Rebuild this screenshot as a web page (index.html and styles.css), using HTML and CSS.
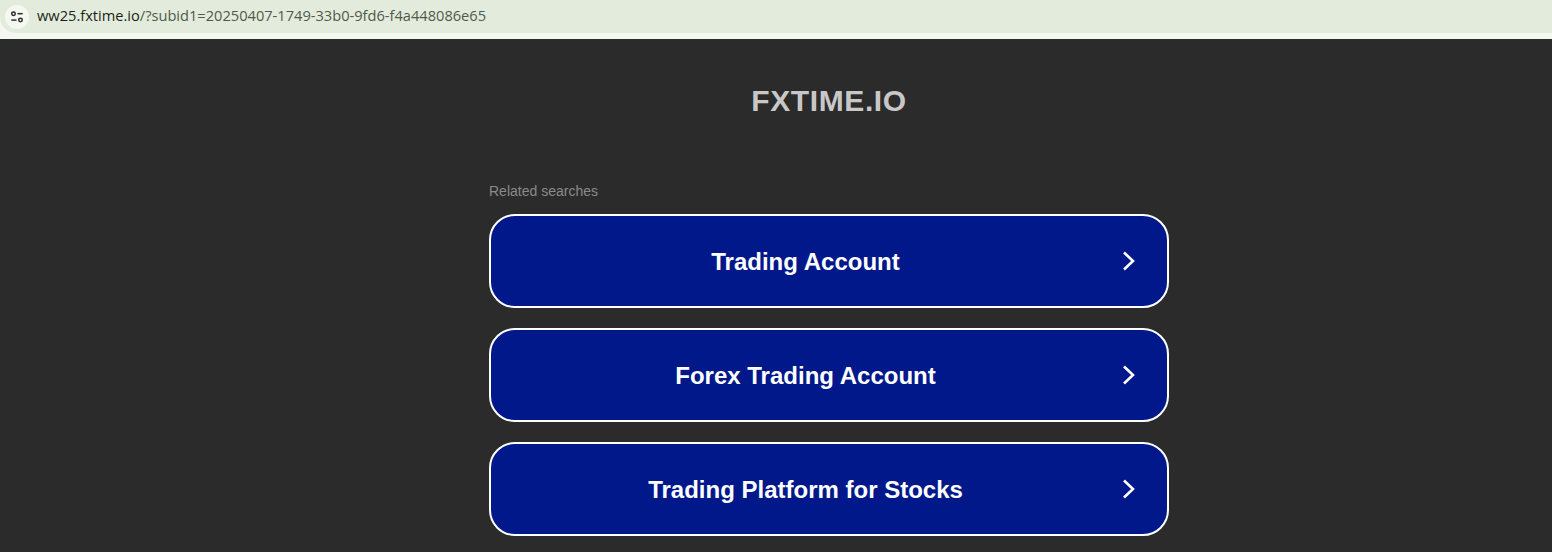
FILE: index.html
```html
<!DOCTYPE html>
<html lang="en">
<head>
  <meta charset="UTF-8">
  <title>fxtime.io</title>
  <link rel="stylesheet" href="styles.css">
</head>
<body>
  <div class="browser-bar">
    <div class="address">
      <span class="site-icon">
        <svg width="14" height="14" viewBox="0 0 16 16" fill="none" stroke="#2b2b2b" stroke-width="1.7">
          <circle cx="4" cy="4.2" r="2"/>
          <path d="M8.5 4.2h6"/>
          <path d="M1.5 11.5h6"/>
          <circle cx="12" cy="11.5" r="2"/>
        </svg>
      </span>
      <span class="url"><span class="host">ww25.fxtime.io</span>/?subid1=20250407-1749-33b0-9fd6-f4a448086e65</span>
    </div>
  </div>

  <div class="page">
    <div class="content">
      <h1 class="site-name">FXTIME.IO</h1>
      <p class="searches-label">Related searches</p>
      <a class="search-link" href="#">
        <span class="search-text">Trading Account</span>
        <svg class="chevron" width="14" height="20" viewBox="0 0 14 20" fill="none" stroke="#fff" stroke-width="2.6"><path d="M2 1.5l9 8.5-9 8.5"/></svg>
      </a>
      <a class="search-link" href="#">
        <span class="search-text">Forex Trading Account</span>
        <svg class="chevron" width="14" height="20" viewBox="0 0 14 20" fill="none" stroke="#fff" stroke-width="2.6"><path d="M2 1.5l9 8.5-9 8.5"/></svg>
      </a>
      <a class="search-link" href="#">
        <span class="search-text">Trading Platform for Stocks</span>
        <svg class="chevron" width="14" height="20" viewBox="0 0 14 20" fill="none" stroke="#fff" stroke-width="2.6"><path d="M2 1.5l9 8.5-9 8.5"/></svg>
      </a>
    </div>
  </div>
</body>
</html>
```

FILE: styles.css
```css
html, body {
  height: 552px;
  overflow: hidden;
}
body {
  margin: 0;
  background-color: #2b2b2b;
  font-family: "Liberation Sans", Arial, sans-serif;
}
.browser-bar {
  height: 39px;
  box-sizing: border-box;
  padding-bottom: 6px;
  background-color: #f5f8f0;
}
.address {
  height: 33px;
  display: flex;
  align-items: center;
  background-color: #e3ecdc;
  border-bottom-left-radius: 16px;
}
.site-icon {
  width: 24px;
  height: 24px;
  margin-left: 5px;
  display: flex;
  align-items: center;
  justify-content: center;
  border-radius: 50%;
  background-color: #f5f8f0;
}
.url {
  margin-left: 8px;
  margin-top: -3px;
  font-family: "Open Sans", "Noto Sans", sans-serif;
  font-size: 14.63px;
  color: #4f5a4d;
}
.host {
  color: #1b1f1b;
}
.page {
  padding-left: 106px;
}
.content {
  width: 680px;
  margin: 0 auto;
}
.site-name {
  margin: 44px 0 0;
  font-size: 30px;
  line-height: 36px;
  letter-spacing: 0.6px;
  font-weight: bold;
  text-align: center;
  color: #c8c8c8;
}
.searches-label {
  margin: 64px 0 15px;
  font-size: 14px;
  line-height: 16px;
  color: #8a8a8a;
}
.search-link {
  height: 94px;
  box-sizing: border-box;
  margin-bottom: 20px;
  padding-right: 31px;
  display: flex;
  align-items: center;
  border: 2px solid #fff;
  border-radius: 26px;
  background-color: #00188a;
  color: #fff;
  text-decoration: none;
}
.search-text {
  flex: 1;
  padding-top: 2px;
  font-size: 24px;
  font-weight: bold;
  text-align: center;
}
.chevron {
  margin-left: 2px;
}
```
